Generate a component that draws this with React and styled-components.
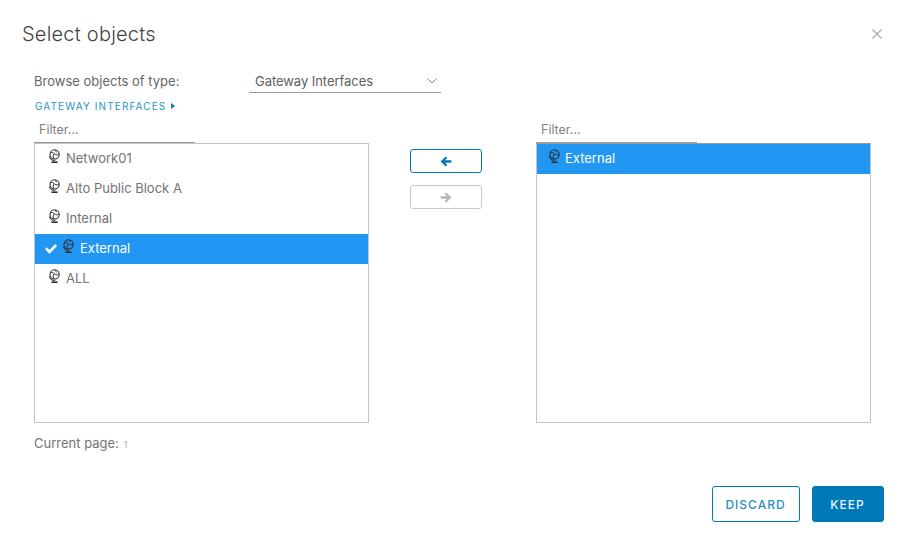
import React from 'react';
import styled, { createGlobalStyle } from 'styled-components';

const Global = createGlobalStyle`
  html, body { margin: 0; padding: 0; background: #fff; }
  body { font-family: 'Inter', 'Liberation Sans', sans-serif; color: #565656; }
`;

const Dialog = styled.div`
  width: 905px;
  height: 544px;
  box-sizing: border-box;
  padding: 22px 21px 22px 22px;
  display: flex;
  flex-direction: column;
  overflow: hidden;
`;
const Header = styled.div`
  display: flex;
  justify-content: space-between;
  align-items: center;
  height: 24px;
`;
const Title = styled.div`
  font-size: 20px;
  font-weight: 300;
  letter-spacing: 0.22px;
  color: #444;
`;
const CloseButton = styled.button`
  border: 0;
  background: none;
  padding: 0;
  width: 14px;
  height: 14px;
  color: #a8a8a8;
  display: flex;
`;
const Body = styled.div`
  padding: 23px 13px 0 12px;
  flex: 1;
`;
const TypeRow = styled.div`
  display: flex;
  align-items: flex-end;
  height: 24px;
`;
const TypeLabel = styled.div`
  width: 215px;
  font-size: 13px;
  line-height: 24px;
  color: #666;
`;
const TypeSelect = styled.div`
  width: 192px;
  height: 24px;
  box-sizing: border-box;
  border-bottom: 1px solid #9a9a9a;
  padding: 0 3px 0 6px;
  display: flex;
  justify-content: space-between;
  align-items: center;
  font-size: 13px;
  letter-spacing: -0.05px;
  color: #5e5e5e;
  margin-top: 1px;
`;
const Crumb = styled.div`
  display: flex;
  align-items: center;
  gap: 5px;
  margin: 7px 0 0 1px;
  height: 12px;
  font-size: 10px;
  letter-spacing: 1.12px;
  color: #2a94c6;
`;
const Caret = styled.span`
  width: 0;
  height: 0;
  border-left: 4px solid #0f7bb0;
  border-top: 3.5px solid transparent;
  border-bottom: 3.5px solid transparent;
`;
const Columns = styled.div`
  display: flex;
  margin-top: 6px;
`;
const ListColumn = styled.div`
  width: 335px;
  display: flex;
  flex-direction: column;
`;
const FilterBox = styled.div`
  width: 161px;
  height: 25px;
  box-sizing: border-box;
  border-bottom: 1px solid #9a9a9a;
  padding-left: 5px;
  font-size: 12.5px;
  line-height: 24px;
  color: #808080;
`;
const ListBox = styled.div`
  height: 278px;
  border: 1px solid #c4c4c4;
  border-top-color: ${p => (p.$right ? '#9a9a9a' : '#c4c4c4')};
`;
const Row = styled.div`
  height: 30px;
  box-sizing: border-box;
  padding: 0 0 2px ${p => p.$inset}px;
  display: flex;
  align-items: center;
  font-size: 13px;
  background: ${p => (p.$selected ? '#2196f3' : 'transparent')};
  color: ${p => (p.$selected ? '#fff' : '#737373')};
`;
const RowText = styled.span`
  margin-left: ${p => p.$gap}px;
`;
const Check = styled.svg`
  width: 14px;
  height: 12px;
  margin: 2px 4px 0 0;
  flex: none;
`;
const Globe = styled.svg`
  width: 13px;
  height: 15px;
  margin-top: -3px;
  flex: none;
`;
const MoveColumn = styled.div`
  width: 167px;
  box-sizing: border-box;
  padding: 31px 0 0 41px;
  display: flex;
  flex-direction: column;
  gap: 12px;
`;
const MoveButton = styled.button`
  width: 72px;
  height: 24px;
  padding: 0;
  border-radius: 3px;
  background: #fff;
  border: 1px solid ${p => (p.disabled ? '#c9c9c9' : '#0079b8')};
  color: ${p => (p.disabled ? '#b5b5b5' : '#0079b8')};
  display: flex;
  align-items: center;
  justify-content: center;
`;
const PageInfo = styled.div`
  margin-top: 12px;
  font-size: 13px;
  line-height: 16px;
  color: #737373;
`;
const PageNumber = styled.span`
  font-size: 9px;
  color: #aaa;
  margin-left: 5px;
`;
const Footer = styled.div`
  display: flex;
  justify-content: flex-end;
  gap: 12px;
`;
const ActionButton = styled.button`
  height: 36px;
  width: ${p => p.$w}px;
  padding: 0 1px 0 0;
  border-radius: 3px;
  border: 1px solid #0079b8;
  background: ${p => (p.$primary ? '#0079b8' : '#fff')};
  color: ${p => (p.$primary ? '#e8f4fa' : '#2a8fc0')};
  font-family: inherit;
  font-size: 12px;
  font-weight: 500;
  letter-spacing: 1px;
`;

const GlobeIcon = () => (
  <Globe viewBox="0 0 13 15" fill="none" stroke="#2b2b2b" strokeWidth="1.1">
    <circle cx="6.6" cy="5.4" r="4.6" />
    <path d="M2.4 3.6c1.8-.5 3 .2 4 1.2s2.5 1.4 4.4.4" strokeWidth="1" />
    <path d="M6.2 4.7C5.2 5.9 5 7.6 5.6 9.8M7.8 1c-.4 1 0 1.7 1 2.2" strokeWidth="1" />
    <path d="M1.3 7.6c.7 2.3 3.2 4.1 6 3.6" />
    <path d="M3.4 13.2h6.2" strokeWidth="1.6" />
  </Globe>
);

const Arrow = ({ left }) => (
  <svg width="12" height="11" viewBox="0 0 11 10" fill="currentColor">
    {left ? (
      <path d="M5.2 0.4 0.6 5l4.6 4.6 1.5-1.5-2-2h5.7V3.9H4.7l2-2z" />
    ) : (
      <path d="M5.8 0.4 10.4 5 5.8 9.6 4.3 8.1l2-2H.6V3.9h5.7l-2-2z" />
    )}
  </svg>
);

const rows = ['Network01', 'Alto Public Block A', 'Internal', 'External', 'ALL'];

export default function App() {
  return (
    <Dialog>
      <Global />
      <Header>
        <Title>Select objects</Title>
        <CloseButton>
          <svg width="14" height="14" viewBox="0 0 14 14" stroke="currentColor" strokeWidth="1.1">
            <path d="M2.5 2.5l9 9M11.5 2.5l-9 9" />
          </svg>
        </CloseButton>
      </Header>
      <Body>
        <TypeRow>
          <TypeLabel>Browse objects of type:</TypeLabel>
          <TypeSelect>
            Gateway Interfaces
            <svg width="12" height="8" viewBox="0 0 12 8" fill="none" stroke="#8c8c8c">
              <path d="M1.5 1.5 6 6l4.5-4.5" />
            </svg>
          </TypeSelect>
        </TypeRow>
        <Crumb>
          GATEWAY INTERFACES
          <Caret />
        </Crumb>
        <Columns>
          <ListColumn>
            <FilterBox>Filter...</FilterBox>
            <ListBox>
              {rows.map(name => {
                const selected = name === 'External';
                return (
                  <Row key={name} $selected={selected} $inset={selected ? 9 : 13}>
                    {selected && (
                      <Check viewBox="0 0 14 12" fill="#fff">
                        <path d="M1 6.2 2.9 4.3l2.6 2.6L11.2 1 13 2.9 5.5 10.7z" />
                      </Check>
                    )}
                    <GlobeIcon />
                    <RowText $gap={5}>{name}</RowText>
                  </Row>
                );
              })}
            </ListBox>
          </ListColumn>
          <MoveColumn>
            <MoveButton>
              <Arrow left />
            </MoveButton>
            <MoveButton disabled>
              <Arrow />
            </MoveButton>
          </MoveColumn>
          <ListColumn>
            <FilterBox>Filter...</FilterBox>
            <ListBox $right>
              <Row $selected $inset={11}>
                <GlobeIcon />
                <RowText $gap={4}>External</RowText>
              </Row>
            </ListBox>
          </ListColumn>
        </Columns>
        <PageInfo>
          Current page:<PageNumber>1</PageNumber>
        </PageInfo>
      </Body>
      <Footer>
        <ActionButton $w={88}>DISCARD</ActionButton>
        <ActionButton $w={72} $primary>KEEP</ActionButton>
      </Footer>
    </Dialog>
  );
}
